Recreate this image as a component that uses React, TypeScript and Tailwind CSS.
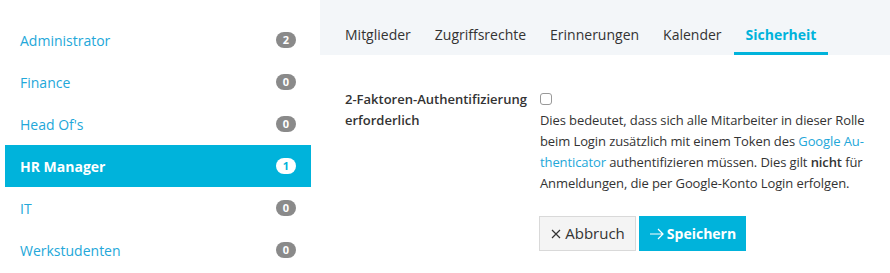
import React, { useState } from 'react';

interface Role {
  name: string;
  count: number;
}

const roles: Role[] = [
  { name: 'Administrator', count: 2 },
  { name: 'Finance', count: 0 },
  { name: "Head Of's", count: 0 },
  { name: 'HR Manager', count: 1 },
  { name: 'IT', count: 0 },
  { name: 'Werkstudenten', count: 0 },
];

const tabs = ['Mitglieder', 'Zugriffsrechte', 'Erinnerungen', 'Kalender', 'Sicherheit'];

const App: React.FC = () => {
  const [activeRole, setActiveRole] = useState('HR Manager');
  const [activeTab, setActiveTab] = useState('Sicherheit');
  const [twoFactor, setTwoFactor] = useState(false);

  return (
    <div className="flex w-[890px] h-[273px] bg-white overflow-hidden font-['Open_Sans',sans-serif]">
      {/* Rollen-Liste */}
      <div className="w-[320px] shrink-0 pl-[5px] pr-[9px] pt-[19px]">
        {roles.map((role) => {
          const active = role.name === activeRole;
          return (
            <button
              key={role.name}
              onClick={() => setActiveRole(role.name)}
              className={`flex w-full items-center justify-between h-[42px] pl-[15px] pr-[15px] text-left text-[14px] ${
                active ? 'bg-[#00b3db] text-white font-bold' : 'text-[#23a7d9]'
              }`}
            >
              <span>{role.name}</span>
              <span
                className={`flex items-center justify-center w-[20px] h-[16px] rounded-full text-[11px] font-bold ${
                  active ? 'bg-white text-[#00b3db]' : 'bg-[#8a8a8a] text-white'
                }`}
              >
                {role.count}
              </span>
            </button>
          );
        })}
      </div>

      {/* Inhalt */}
      <div className="flex-1 flex flex-col">
        <div className="flex h-[55px] bg-[#f3f6f9] pl-[13px]">
          {tabs.map((tab) => {
            const active = tab === activeTab;
            return (
              <button
                key={tab}
                onClick={() => setActiveTab(tab)}
                className={`h-full px-[12px] pt-[16px] flex items-center border-b-[3px] text-[14px] ${
                  active
                    ? 'border-[#00b3db] text-[#00b3db] font-bold'
                    : 'border-transparent text-[#333]'
                }`}
              >
                {tab}
              </button>
            );
          })}
        </div>

        <div className="flex pl-[25px] pt-[34px] text-[13px] leading-[21px] text-[#333]">
          <div className="w-[195px] font-semibold">
            2-Faktoren-Authentifizierung
            <br />
            erforderlich
          </div>
          <div className="flex flex-col">
            <input
              type="checkbox"
              checked={twoFactor}
              onChange={(e) => setTwoFactor(e.target.checked)}
              className="w-[12px] h-[12px] mt-[4px] mb-[5px] appearance-none border border-[#999] rounded-[3px] bg-white"
            />
            <p className="tracking-[-0.1px]">
              Dies bedeutet, dass sich alle Mitarbeiter in dieser Rolle
              <br />
              beim Login zusätzlich mit einem Token des{' '}
              <a className="text-[#23a7d9]">Google Au-
              <br />
              thenticator</a> authentifizieren müssen. Dies gilt <b className="font-semibold">nicht</b> für
              <br />
              Anmeldungen, die per Google-Konto Login erfolgen.
            </p>
            <div className="flex gap-[3px] mt-[22px] -ml-[1px]">
              <button className="h-[35px] w-[97px] justify-center flex items-center gap-[3px] bg-[#f4f4f4] border border-[#d9d9d9] text-[#333] text-[15px]">
                <svg width="12" height="12" viewBox="0 0 12 12" stroke="currentColor" strokeWidth="1.2">
                  <path d="M2 2l8 8M10 2l-8 8" />
                </svg>
                Abbruch
              </button>
              <button className="h-[35px] w-[107px] justify-center flex items-center gap-[3px] bg-[#00b3db] text-white font-bold text-[14px]">
                <svg width="15" height="12" viewBox="0 0 15 12" fill="none" stroke="currentColor" strokeWidth="1.2">
                  <path d="M1 6h13M9 1l5 5-5 5" />
                </svg>
                Speichern
              </button>
            </div>
          </div>
        </div>
      </div>
    </div>
  );
};

export default App;
